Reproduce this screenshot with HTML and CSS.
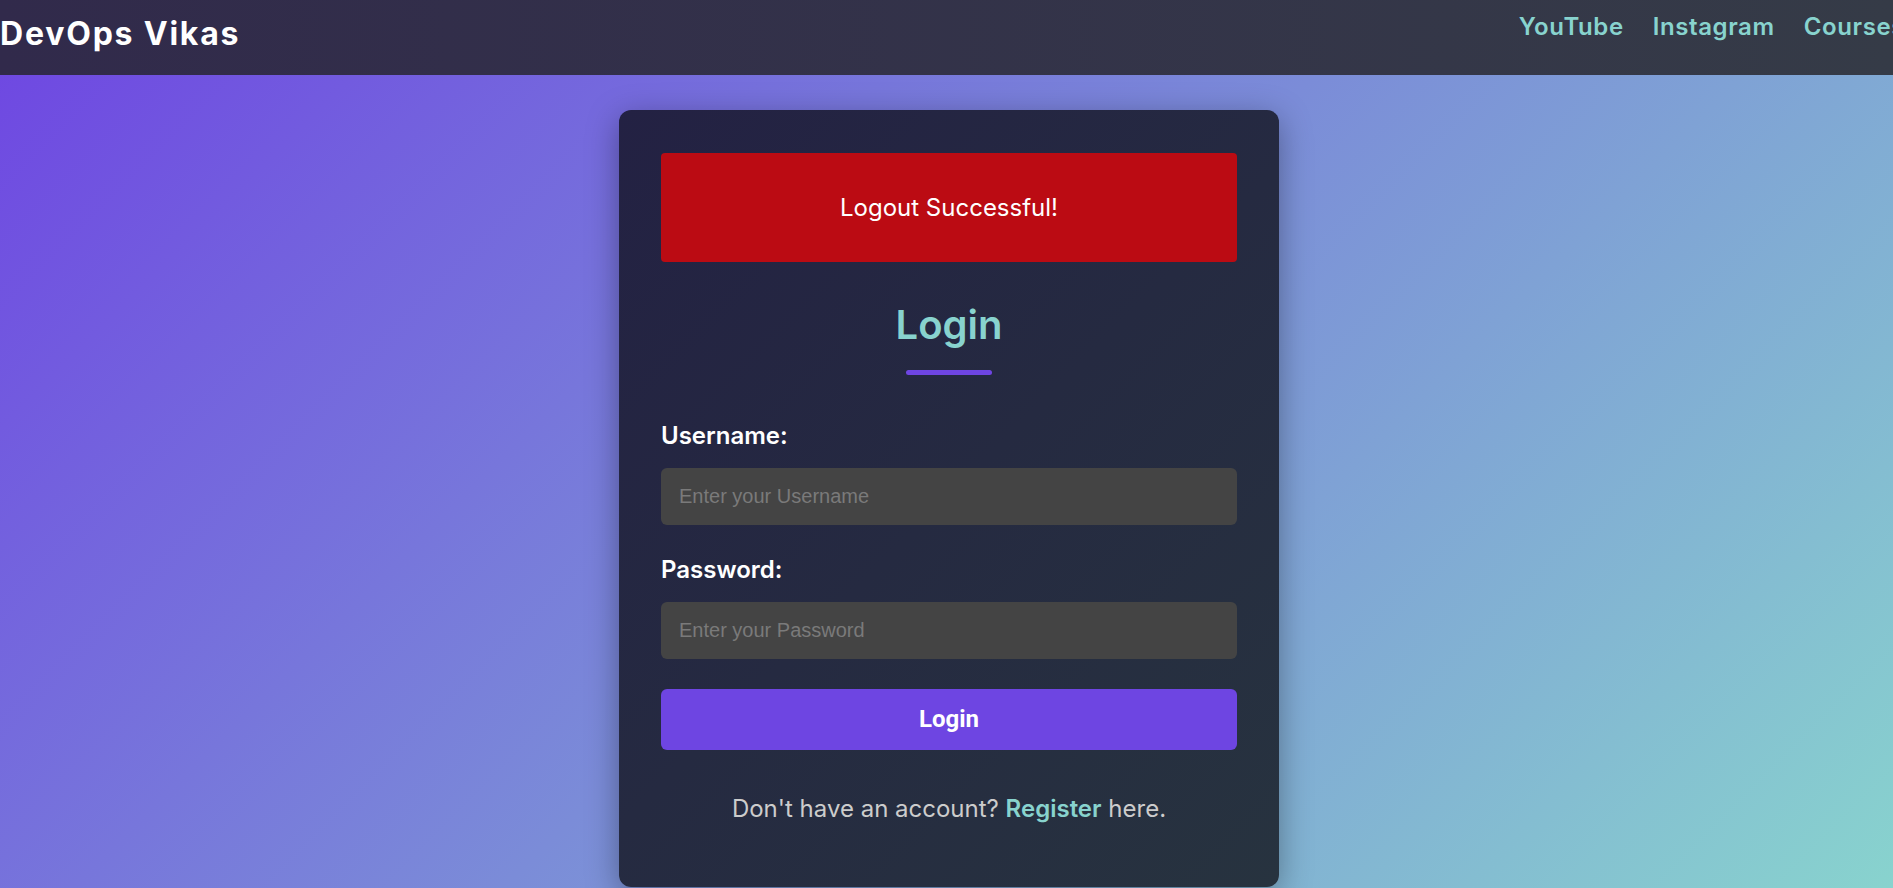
FILE: index.html
```html
<!DOCTYPE html>
<html lang="en">
<head>
<meta charset="utf-8">
<title>Login - DevOps Vikas</title>
<link rel="stylesheet" href="styles.css">
</head>
<body>
<header class="site-header">
  <div class="brand">DevOps Vikas</div>
  <nav class="main-nav">
    <a href="#" class="nav-link">YouTube</a>
    <a href="#" class="nav-link">Instagram</a>
    <a href="#" class="nav-link">Courses</a>
  </nav>
</header>
<main class="page">
  <div class="card">
    <div class="alert">Logout Successful!</div>
    <h2 class="title">Login</h2>
    <div class="title-bar"></div>
    <form class="login-form">
      <div class="field">
        <label class="field-label" for="username">Username:</label>
        <input class="field-input" id="username" type="text" placeholder="Enter your Username">
      </div>
      <div class="field">
        <label class="field-label" for="password">Password:</label>
        <input class="field-input" id="password" type="password" placeholder="Enter your Password">
      </div>
      <button class="submit-btn" type="button">Login</button>
    </form>
    <p class="switch">Don't have an account? <a href="#" class="switch-link">Register</a> here.</p>
  </div>
</main>
</body>
</html>
```

FILE: styles.css
```css
html, body {
  height: 100%;
}

body {
  margin: 0;
  font-family: "Inter", "Open Sans", sans-serif;
  background: linear-gradient(135deg, #6e45e2, #88d3ce);
  overflow: hidden;
  color: #fff;
}

.site-header {
  height: 75px;
  display: flex;
  justify-content: space-between;
  align-items: flex-start;
  background: linear-gradient(90deg, #312a4b, #353b47);
}

.brand {
  padding-top: 15px;
  font-size: 32px;
  line-height: 38px;
  font-weight: 700;
  letter-spacing: 1.8px;
  color: #fff;
}

.main-nav {
  display: flex;
  gap: 29px;
  padding-top: 11.5px;
  margin-right: -12px;
}

.nav-link {
  font-size: 24px;
  line-height: 29px;
  font-weight: 600;
  letter-spacing: 0.6px;
  color: #88d3ce;
  text-decoration: none;
}

.page {
  display: flex;
  justify-content: center;
  padding-left: 5px;
}

.card {
  width: 660px;
  box-sizing: border-box;
  margin-top: 35px;
  padding: 43px 42px 43px;
  border-radius: 12px;
  background: linear-gradient(135deg, #232143, #27333f);
  box-shadow: 0 8px 32px rgba(0, 0, 0, 0.35);
}

.alert {
  height: 109px;
  display: flex;
  align-items: center;
  justify-content: center;
  background: #bb0b13;
  border-radius: 4px;
  font-size: 24px;
  color: #fff;
  margin-bottom: 39px;
}

.title {
  margin: 0;
  text-align: center;
  font-size: 40px;
  line-height: 48px;
  font-weight: 600;
  color: #88d3ce;
}

.title-bar {
  width: 86px;
  height: 5px;
  margin: 21px auto 0;
  border-radius: 3px;
  background: #6e45e2;
}

.login-form {
  margin-top: 45.5px;
  display: flex;
  flex-direction: column;
}

.field {
  display: flex;
  flex-direction: column;
  margin-bottom: 30px;
}

.field-label {
  font-size: 24px;
  line-height: 30px;
  font-weight: 600;
  color: #fff;
  margin-bottom: 17px;
}

.field-input {
  height: 57px;
  box-sizing: border-box;
  border: none;
  border-radius: 6px;
  background: #444444;
  padding: 0 18px;
  font-family: "Liberation Sans", Arial, sans-serif;
  font-size: 20px;
  color: #fff;
  outline: none;
}

.field-input::placeholder {
  color: #7a7a7a;
}

.submit-btn {
  height: 61px;
  border: none;
  border-radius: 6px;
  background: #6e45e2;
  color: #fff;
  font-family: "Roboto", "Liberation Sans", sans-serif;
  font-size: 24px;
  font-weight: 700;
  cursor: pointer;
}

.switch {
  margin: 41.5px 0 17px;
  text-align: center;
  font-size: 24px;
  line-height: 36px;
  color: #cccccc;
}

.switch-link {
  color: #88d3ce;
  font-weight: 600;
  text-decoration: none;
}
```
